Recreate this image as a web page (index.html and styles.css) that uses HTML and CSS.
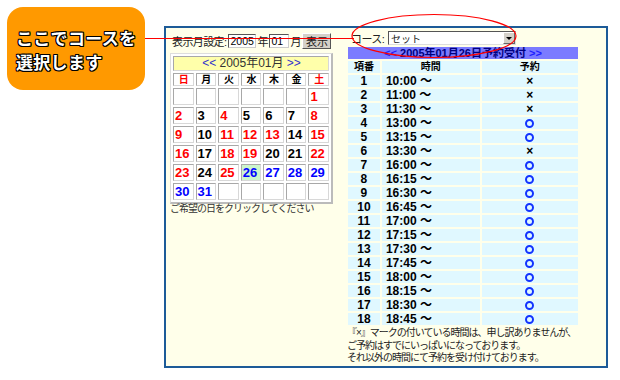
FILE: index.html
```html
<!DOCTYPE html>
<html lang="ja">
<head>
    <meta charset="UTF-8">
    <title>コース予約</title>
    <link rel="stylesheet" href="styles.css">
</head>
<body>
    <div class="page">
        <div class="callout">ここでコースを<br>選択します</div>

        <div class="frame">
            <div class="month">
                <form class="month-form">
                    <span class="label">表示月設定:</span>
                    <input type="text" class="year-input" value="2005">
                    <span class="unit">年</span>
                    <input type="text" class="mon-input" value="01">
                    <span class="unit">月</span>
                    <button type="button" class="show-btn">表示</button>
                </form>

                <div class="cal-box">
                    <table class="cal">
                        <tr>
                            <td class="cal-title" colspan="7"><span class="nav">&lt;&lt;</span> 2005年01月 <span class="nav">&gt;&gt;</span></td>
                        </tr>
                        <tr class="week-head">
                            <th class="red">日</th><th>月</th><th>火</th><th>水</th><th>木</th><th>金</th><th class="red">土</th>
                        </tr>
                        <tr class="week">
                            <td></td><td></td><td></td><td></td><td></td><td></td><td class="red">1</td>
                        </tr>
                        <tr class="week">
                            <td class="red">2</td><td>3</td><td class="red">4</td><td>5</td><td>6</td><td>7</td><td class="red">8</td>
                        </tr>
                        <tr class="week">
                            <td class="red">9</td><td>10</td><td class="red">11</td><td class="red">12</td><td class="red">13</td><td>14</td><td class="red">15</td>
                        </tr>
                        <tr class="week">
                            <td class="red">16</td><td>17</td><td class="red">18</td><td class="red">19</td><td>20</td><td>21</td><td class="red">22</td>
                        </tr>
                        <tr class="week">
                            <td class="red">23</td><td>24</td><td class="red">25</td><td class="blue today">26</td><td class="blue">27</td><td class="blue">28</td><td class="blue">29</td>
                        </tr>
                        <tr class="week">
                            <td class="blue">30</td><td class="blue">31</td><td></td><td></td><td></td><td></td><td></td>
                        </tr>
                    </table>
                </div>
                <p class="note">ご希望の日をクリックしてください</p>
            </div>

            <div class="course">
                <div class="course-row">
                    <span class="label">コース:</span>
                    <div class="select">
                        <span class="select-text">セット</span>
                        <span class="select-arrow"></span>
                    </div>
                </div>

                <table class="slots">
                    <tr>
                        <td class="slots-title" colspan="3"><span class="nav">&lt;&lt;</span> 2005年01月26日予約受付 <span class="nav">&gt;&gt;</span></td>
                    </tr>
                    <tr class="slots-head">
                        <th class="col-no">項番</th><th class="col-time">時間</th><th class="col-mark">予約</th>
                    </tr>
                    <tr><td class="no">1</td><td class="time">10:00 ～</td><td class="mark">×</td></tr>
                    <tr><td class="no">2</td><td class="time">11:00 ～</td><td class="mark">×</td></tr>
                    <tr><td class="no">3</td><td class="time">11:30 ～</td><td class="mark">×</td></tr>
                    <tr><td class="no">4</td><td class="time">13:00 ～</td><td class="mark"><span class="ok"></span></td></tr>
                    <tr><td class="no">5</td><td class="time">13:15 ～</td><td class="mark"><span class="ok"></span></td></tr>
                    <tr><td class="no">6</td><td class="time">13:30 ～</td><td class="mark">×</td></tr>
                    <tr><td class="no">7</td><td class="time">16:00 ～</td><td class="mark"><span class="ok"></span></td></tr>
                    <tr><td class="no">8</td><td class="time">16:15 ～</td><td class="mark"><span class="ok"></span></td></tr>
                    <tr><td class="no">9</td><td class="time">16:30 ～</td><td class="mark"><span class="ok"></span></td></tr>
                    <tr><td class="no">10</td><td class="time">16:45 ～</td><td class="mark"><span class="ok"></span></td></tr>
                    <tr><td class="no">11</td><td class="time">17:00 ～</td><td class="mark"><span class="ok"></span></td></tr>
                    <tr><td class="no">12</td><td class="time">17:15 ～</td><td class="mark"><span class="ok"></span></td></tr>
                    <tr><td class="no">13</td><td class="time">17:30 ～</td><td class="mark"><span class="ok"></span></td></tr>
                    <tr><td class="no">14</td><td class="time">17:45 ～</td><td class="mark"><span class="ok"></span></td></tr>
                    <tr><td class="no">15</td><td class="time">18:00 ～</td><td class="mark"><span class="ok"></span></td></tr>
                    <tr><td class="no">16</td><td class="time">18:15 ～</td><td class="mark"><span class="ok"></span></td></tr>
                    <tr><td class="no">17</td><td class="time">18:30 ～</td><td class="mark"><span class="ok"></span></td></tr>
                    <tr><td class="no">18</td><td class="time">18:45 ～</td><td class="mark"><span class="ok"></span></td></tr>
                </table>

                <p class="slots-note">『×』マークの付いている時間は、申し訳ありませんが、<br>ご予約はすでにいっぱいになっております。<br>それ以外の時間にて予約を受け付けております。</p>
            </div>
        </div>
    </div>

    <!-- pointer from the callout to the course select -->
    <svg class="pointer" width="620" height="380" viewBox="0 0 620 380">
        <line x1="145" y1="38.5" x2="354" y2="38.5" stroke="#ff0000" stroke-width="1.2"/>
        <ellipse cx="434" cy="36" rx="82" ry="21.5" fill="none" stroke="#ff0000" stroke-width="1.2"/>
    </svg>
</body>
</html>
```

FILE: styles.css
```css
* {
    margin: 0;
    padding: 0;
    box-sizing: border-box;
}

body {
    width: 620px;
    height: 380px;
    background: #fff;
    position: relative;
    font-family: "Liberation Sans", "Noto Sans CJK JP", sans-serif;
    color: #000;
}

.page {
    display: flex;
    align-items: flex-start;
    padding: 7px 0 0 7px;
}

.callout {
    width: 138px;
    height: 83px;
    margin-right: 19px;
    padding: 19px 0 0 9px;
    background: #ff9900;
    border-radius: 16px;
    color: #fff;
    font-family: "Noto Sans CJK JP", sans-serif;
    font-weight: bold;
    font-size: 17px;
    line-height: 24px;
    letter-spacing: 0.3px;
    text-shadow: 1px 0 0 #000, -1px 0 0 #000, 0 1px 0 #000, 0 -1px 0 #000,
                 1px 1px 0 #000, -1px -1px 0 #000, 1px -1px 0 #000, -1px 1px 0 #000;
}

.frame {
    width: 444px;
    height: 342px;
    margin-top: 19px;
    border: 2px solid #1d5b98;
    background: #ffffea;
    display: flex;
    padding: 3px 0 0 4px;
    gap: 13px;
}

.label {
    flex-shrink: 0;
    white-space: nowrap;
    font-size: 11px;
    letter-spacing: -0.6px;
    color: #222;
}

/* left side: month form and calendar */
.month {
    width: 164px;
}

.month-form {
    display: flex;
    align-items: center;
    height: 17px;
    margin-top: 1px;
    padding-left: 2px;
}

.month-form input {
    flex-shrink: 0;
    height: 14px;
    border: 1px solid #555;
    border-right-color: #ccc;
    border-bottom-color: #ccc;
    font-family: "Liberation Sans", sans-serif;
    font-size: 10.5px;
    padding: 0 0 0 1px;
    background: #fff;
}

.year-input {
    width: 28px;
    margin-left: 2px;
}

.mon-input {
    width: 20px;
}

.unit {
    flex-shrink: 0;
    font-size: 11px;
    width: 13px;
    text-align: center;
    color: #222;
}

.show-btn {
    flex-shrink: 0;
    width: 29px;
    height: 16px;
    background: #d4d0c8;
    border: 1px solid;
    border-color: #fff #555 #555 #fff;
    font-family: "Noto Sans CJK JP", sans-serif;
    font-size: 11px;
    line-height: 12px;
    color: #222;
}

.cal-box {
    width: 163px;
    margin-top: 4px;
    background: #fff;
    border: 1px solid #ddd;
    border-right: 2px solid #bbb;
    border-bottom: 2px solid #bbb;
}

.cal {
    border-collapse: separate;
    border-spacing: 2px;
    width: 100%;
}

.cal td,
.cal th {
    width: 21px;
    border: 1px solid;
    border-color: #a8a8a8 #d8d8d8 #d8d8d8 #a8a8a8;
    padding: 0 0 0 1px;
}

.cal-title {
    height: 15px;
    background: #ffffaa;
    text-align: center;
    font-size: 12px;
    line-height: 13px;
    color: #333;
}

.nav {
    color: #3333cc;
}

.week-head th {
    height: 13px;
    font-size: 10px;
    line-height: 11px;
    text-align: center;
    font-weight: bold;
}

.week td {
    height: 17px;
    font-size: 13px;
    font-weight: bold;
    line-height: 15px;
    text-align: left;
}

.cal .red {
    color: #ff0000;
}

.cal .blue {
    color: #0000ff;
}

.cal .today {
    background: #ccf5cc;
}

.note {
    margin-top: -1px;
    font-size: 10px;
    line-height: 11px;
    letter-spacing: -1px;
    color: #333;
}

/* right side: course select and time slots */
.course {
    width: 233px;
}

.course-row {
    display: flex;
    align-items: center;
    height: 14px;
    padding-left: 4px;
}

.select {
    display: flex;
    align-items: center;
    width: 128px;
    height: 14px;
    margin-left: 4px;
    background: #fff;
    border: 1px solid;
    border-color: #555 #ddd #ddd #555;
}

.select-text {
    flex: 1;
    font-size: 10px;
    padding-left: 2px;
    color: #222;
}

.select-arrow {
    width: 12px;
    height: 12px;
    background: #d4d0c8;
    border: 1px solid;
    border-color: #fff #666 #666 #fff;
    position: relative;
}

.select-arrow::after {
    content: "";
    position: absolute;
    left: 2px;
    top: 4px;
    border-left: 3px solid transparent;
    border-right: 3px solid transparent;
    border-top: 3px solid #000;
}

.slots {
    border-collapse: separate;
    border-spacing: 2px;
    margin-left: -1px;
}

.slots td,
.slots th {
    height: 12px;
    padding: 0;
    font-size: 12px;
    line-height: 12px;
    background: #e0f8ff;
}

.slots-title {
    height: 11px;
    background: #7b7bff !important;
    text-align: center;
    font-weight: bold;
    font-size: 11px !important;
    line-height: 11px !important;
    color: #000080;
}

.slots-title .nav {
    color: #2020ff;
}

.slots-head th {
    font-size: 10px;
    font-weight: bold;
}

.col-no {
    width: 32px;
}

.col-time {
    width: 98px;
}

.col-mark {
    width: 97px;
}

.no {
    text-align: center;
    font-weight: bold;
}

.time {
    padding-left: 4px !important;
    font-weight: bold;
}

.mark {
    text-align: center;
    font-weight: bold;
}

.ok {
    display: inline-block;
    width: 9px;
    height: 9px;
    border: 2px solid #1234ff;
    border-radius: 50%;
    vertical-align: -1px;
}

.slots-note {
    white-space: nowrap;
    font-size: 10px;
    line-height: 12.5px;
    letter-spacing: -1px;
    color: #222;
}

.pointer {
    position: absolute;
    top: 0;
    left: 0;
    pointer-events: none;
}
```
